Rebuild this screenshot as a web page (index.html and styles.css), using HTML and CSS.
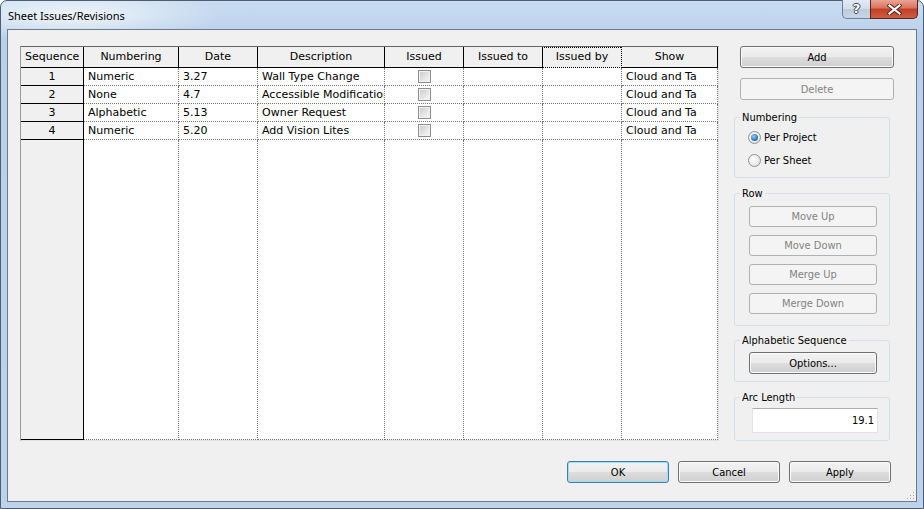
FILE: index.html
```html
<!DOCTYPE html>
<html lang="en">
<head>
    <meta charset="UTF-8">
    <title>Sheet Issues/Revisions</title>
    <link rel="stylesheet" href="styles.css">
</head>
<body>
    <div class="window">
        <div class="titlebar">
            <span class="title">Sheet Issues/Revisions</span>
            <div class="capbtns">
                <span class="cap-help">?</span>
                <span class="cap-close">
                    <svg width="15" height="11" viewBox="0 0 15 11">
                        <path d="M2.5 1.5 L12.5 9.5 M12.5 1.5 L2.5 9.5" stroke="#4a1f18" stroke-width="4" stroke-linecap="square"/>
                        <path d="M2.5 1.5 L12.5 9.5 M12.5 1.5 L2.5 9.5" stroke="#fff" stroke-width="2.2" stroke-linecap="square"/>
                    </svg>
                </span>
            </div>
        </div>

        <div class="client">
            <div class="main">
                <div class="grid">
                    <table>
                        <colgroup>
                            <col style="width:63px">
                            <col style="width:95px">
                            <col style="width:79px">
                            <col style="width:127px">
                            <col style="width:79px">
                            <col style="width:79px">
                            <col style="width:79px">
                            <col style="width:96px">
                        </colgroup>
                        <tr class="head">
                            <th>Sequence</th>
                            <th>Numbering</th>
                            <th>Date</th>
                            <th>Description</th>
                            <th>Issued</th>
                            <th>Issued to</th>
                            <th class="focus">Issued by</th>
                            <th>Show</th>
                        </tr>
                        <tr class="row">
                            <td class="seq">1</td>
                            <td>Numeric</td>
                            <td>3.27</td>
                            <td>Wall Type Change</td>
                            <td class="chk"><span class="checkbox"></span></td>
                            <td></td>
                            <td></td>
                            <td>Cloud and Ta</td>
                        </tr>
                        <tr class="row">
                            <td class="seq">2</td>
                            <td>None</td>
                            <td>4.7</td>
                            <td>Accessible Modifications</td>
                            <td class="chk"><span class="checkbox"></span></td>
                            <td></td>
                            <td></td>
                            <td>Cloud and Ta</td>
                        </tr>
                        <tr class="row">
                            <td class="seq">3</td>
                            <td>Alphabetic</td>
                            <td>5.13</td>
                            <td>Owner Request</td>
                            <td class="chk"><span class="checkbox"></span></td>
                            <td></td>
                            <td></td>
                            <td>Cloud and Ta</td>
                        </tr>
                        <tr class="row">
                            <td class="seq">4</td>
                            <td>Numeric</td>
                            <td>5.20</td>
                            <td>Add Vision Lites</td>
                            <td class="chk"><span class="checkbox"></span></td>
                            <td></td>
                            <td></td>
                            <td>Cloud and Ta</td>
                        </tr>
                        <tr class="filler">
                            <td class="seq"></td>
                            <td></td><td></td><td></td><td></td><td></td><td></td><td></td>
                        </tr>
                    </table>
                </div>

                <div class="side">
                    <button class="btn wide">Add</button>
                    <button class="btn wide off delete">Delete</button>

                    <fieldset class="box numbering">
                        <legend>Numbering</legend>
                        <div class="opt"><span class="radio on"></span>Per Project</div>
                        <div class="opt"><span class="radio"></span>Per Sheet</div>
                    </fieldset>

                    <fieldset class="box rowbox">
                        <legend>Row</legend>
                        <button class="btn small off">Move Up</button>
                        <button class="btn small off">Move Down</button>
                        <button class="btn small off">Merge Up</button>
                        <button class="btn small off">Merge Down</button>
                    </fieldset>

                    <fieldset class="box alpha">
                        <legend>Alphabetic Sequence</legend>
                        <button class="btn small options">Options...</button>
                    </fieldset>

                    <fieldset class="box arc">
                        <legend>Arc Length</legend>
                        <div class="textbox">19.1</div>
                    </fieldset>
                </div>
            </div>

            <div class="footer">
                <button class="btn foot ok">OK</button>
                <button class="btn foot">Cancel</button>
                <button class="btn foot">Apply</button>
            </div>

            <svg class="grip" width="9" height="9" viewBox="0 0 9 9">
                <rect x="7" y="1" width="1" height="1" fill="#a8a8a8"/>
                <rect x="4" y="4" width="1" height="1" fill="#a8a8a8"/>
                <rect x="7" y="4" width="1" height="1" fill="#a8a8a8"/>
                <rect x="1" y="7" width="1" height="1" fill="#a8a8a8"/>
                <rect x="4" y="7" width="1" height="1" fill="#a8a8a8"/>
                <rect x="7" y="7" width="1" height="1" fill="#a8a8a8"/>
            </svg>
        </div>
    </div>
</body>
</html>
```

FILE: styles.css
```css
body{
    margin: 0;
    font-family: "DejaVu Sans Condensed", "DejaVu Sans", sans-serif;
    font-size: 11px;
    color: #000;
    background: #fff;
}
.window{
    width: 924px;
    height: 509px;
    box-sizing: border-box;
    border: 1px solid #4e5e70;
    border-radius: 7px 7px 0 0;
    padding: 0 6px 6px 6px;
    background:
        radial-gradient(ellipse 150px 26px at 70px 14px, rgba(255,255,255,.75), rgba(255,255,255,0)),
        linear-gradient(#c9dcf1, #b8d0ea 40px, #bcd3eb);
}
.titlebar{
    height: 28px;
    display: flex;
    justify-content: space-between;
    align-items: flex-start;
}
.title{
    font-family: "Noto Sans", sans-serif;
    font-size: 11px;
    line-height: 29px;
    padding-left: 1px;
}
.capbtns{
    display: flex;
    margin-top: -1px;
    margin-right: -1px;
}
.cap-help{
    width: 28px;
    height: 19px;
    box-sizing: border-box;
    border: 1px solid #6f7f94;
    border-right: none;
    border-top: none;
    border-radius: 0 0 0 5px;
    background: linear-gradient(#e3ebf4, #d2deeb 50%, #bccbdc 50%, #c9d6e5);
    color: #fff;
    font-family: "DejaVu Sans", sans-serif;
    font-weight: bold;
    font-size: 13px;
    line-height: 18px;
    text-align: center;
    text-shadow: 1px 0 0 #3a4656, -1px 0 0 #3a4656, 0 1px 0 #3a4656, 0 -1px 0 #3a4656;
}
.cap-close{
    width: 48px;
    height: 19px;
    box-sizing: border-box;
    border: 1px solid #5a231b;
    border-top: none;
    border-radius: 0 0 5px 0;
    background: linear-gradient(#eaa394, #d8735c 45%, #c23e26 50%, #cf5d40);
    display: flex;
    align-items: center;
    justify-content: center;
}
.client{
    position: relative;
    height: 473px;
    box-sizing: border-box;
    border: 1px solid #6c7a8a;
    background: #f0f0f0;
    padding: 16px 0 0 12px;
}
.main{
    display: flex;
    align-items: flex-start;
}
.grid{
    width: 699px;
    height: 395px;
    box-sizing: border-box;
    border: 1px solid;
    border-color: #646464 #e2e2e2 #e2e2e2 #9a9a9a;
    background: #fff;
    font-family: "DejaVu Sans", sans-serif;
}
.grid table{
    border-collapse: separate;
    border-spacing: 0;
    table-layout: fixed;
    width: 697px;
    height: 100%;
}
.grid th,
.grid td{
    padding: 0 4px;
    white-space: nowrap;
    overflow: hidden;
    text-overflow: clip;
    font-weight: normal;
    line-height: 16px;
    box-sizing: border-box;
}
.grid th{
    background: #f0f0f0;
    border-right: 1px solid #000;
    border-bottom: 1px solid #000;
    text-align: center;
    height: 21px;
    position: relative;
}
.grid th.focus{
    border-right-style: dotted;
    border-bottom-style: dotted;
}
.grid th.focus::after{
    content: "";
    position: absolute;
    left: -1px;
    top: 0;
    right: 0;
    bottom: 0;
    border-left: 1px dotted #000;
    border-top: 1px dotted #000;
}
.grid td{
    border-right: 1px dotted #777;
    border-bottom: 1px dotted #777;
    text-align: left;
    vertical-align: middle;
}
.grid tr.row td{
    height: 18px;
}
.grid td.seq{
    background: #f0f0f0;
    border-right: 1px solid #000;
    border-bottom: 1px solid #000;
    text-align: center;
}
.grid td.chk{
    text-align: center;
    padding: 0;
}
.checkbox{
    display: inline-block;
    width: 13px;
    height: 13px;
    box-sizing: border-box;
    border: 1px solid #8e8f8f;
    background: linear-gradient(135deg, #c9c9c9, #ececec 70%, #f6f6f6);
    box-shadow: inset 0 0 0 1px #f2f2f2;
    vertical-align: middle;
    margin-top: -1px;
}
.side{
    margin-left: 15px;
    width: 160px;
    display: flex;
    flex-direction: column;
}
.btn{
    font: inherit;
    color: #000;
    padding: 0;
    box-sizing: border-box;
    border: 1px solid #707070;
    border-radius: 3px;
    background: linear-gradient(#f2f2f2, #ebebeb 48%, #dddddd 52%, #cfcfcf);
    box-shadow: inset 0 0 0 1px #fbfbfb;
}
.btn.off{
    border-color: #adb2b5;
    background: #f4f4f4;
    box-shadow: none;
    color: #838383;
}
.wide{
    margin-left: 6px;
    width: 154px;
    height: 22px;
}
.delete{
    margin-top: 10px;
}
.box{
    margin: 0;
    padding: 0;
    width: 156px;
    box-sizing: border-box;
    border: 1px solid #d5dfe5;
    border-radius: 3px;
}
.box legend{
    margin-left: 5px;
    padding: 0 2px;
    line-height: 13px;
}
.numbering{
    margin-top: 11px;
    padding: 2px 0 5px 0;
}
.opt{
    height: 23px;
    display: flex;
    align-items: center;
    margin-left: 13px;
}
.radio{
    width: 13px;
    height: 13px;
    box-sizing: border-box;
    border-radius: 50%;
    border: 1px solid #8e8f8f;
    background: radial-gradient(circle at 40% 35%, #ffffff, #dadada);
    margin-right: 3px;
    position: relative;
}
.radio.on::after{
    content: "";
    position: absolute;
    left: 2px;
    top: 2px;
    width: 7px;
    height: 7px;
    border-radius: 50%;
    background: radial-gradient(circle at 40% 35%, #8fd0f5, #1f6fb0 70%, #18507f);
}
.rowbox{
    margin-top: 9px;
    padding: 6px 0 11px 0;
    display: flex;
    flex-direction: column;
    gap: 8px;
}
.small{
    width: 128px;
    height: 21px;
    margin-left: 14px;
}
.alpha{
    margin-top: 8px;
    padding: 5px 0 7px 0;
}
.options{
    height: 22px;
}
.arc{
    margin-top: 9px;
    padding: 4px 0 7px 0;
}
.textbox{
    margin-left: 17px;
    width: 126px;
    height: 25px;
    box-sizing: border-box;
    background: #fff;
    border: 1px solid #e2e3ea;
    border-top-color: #abadb3;
    text-align: right;
    padding: 0 3px;
    line-height: 23px;
}
.footer{
    display: flex;
    justify-content: flex-end;
    gap: 9px;
    margin-top: 20px;
    padding-right: 25px;
}
.foot{
    width: 102px;
    height: 22px;
}
.ok{
    border-color: #3c7fb1;
    box-shadow: inset 0 0 0 1px #9fdcf5;
}
.grip{
    position: absolute;
    right: 1px;
    bottom: 1px;
}
```
